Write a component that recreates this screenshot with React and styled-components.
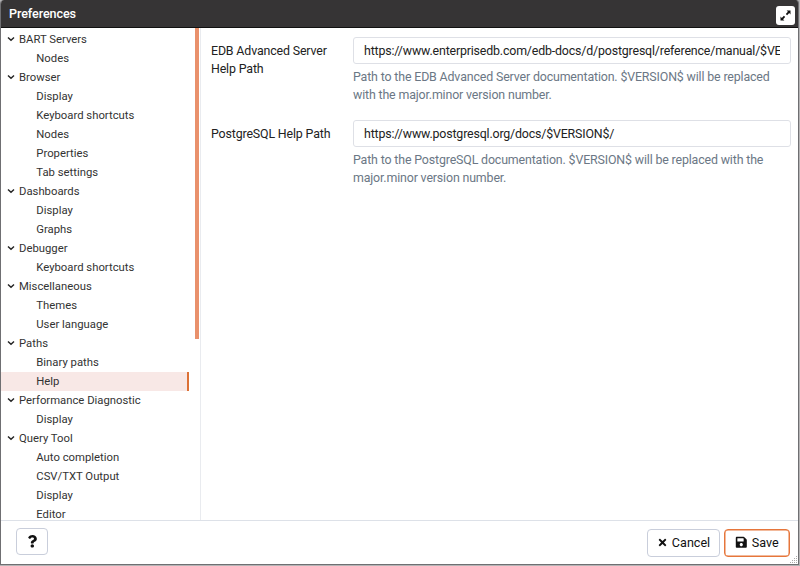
import React from "react";
import styled, { createGlobalStyle, css } from "styled-components";
import { FaQuestion, FaSave, FaTimes } from "react-icons/fa";

const GlobalStyle = createGlobalStyle`
  *, *::before, *::after { box-sizing: border-box; }
  html, body { margin: 0; overflow: hidden; }
  body { background: #b5b4b5; font-family: Roboto, sans-serif; font-size: 12.4px; letter-spacing: -0.15px; color: #222; }
`;

const Dialog = styled.div`
  position: relative;
  display: flex;
  flex-direction: column;
  width: 799px;
  height: 565px;
  background: #fff;
  border: 1px solid #6f6f72;
  border-top: 0;
  border-radius: 4px 3px 0 0;
  overflow: hidden;
`;

const TitleBar = styled.header`
  display: flex;
  align-items: center;
  justify-content: space-between;
  flex: 0 0 28px;
  padding: 0 3px 0 8px;
  background: #363435;
  border-bottom: 1px solid #111;
`;

const Title = styled.h1`
  margin: 1px 0 0;
  color: #fff;
  font-size: 12.6px;
  font-weight: 500;
  line-height: 26px;
  letter-spacing: -0.1px;
`;

const ExpandButton = styled.button`
  display: flex;
  align-items: center;
  justify-content: center;
  width: 19px;
  height: 19px;
  margin-top: 3px;
  padding: 0;
  border: 0;
  border-radius: 3px;
  background: #fff;
  color: #111;
`;

const ExpandIcon = styled.svg`
  width: 11px;
  height: 11px;
  fill: #111;
`;

const Body = styled.main`
  display: flex;
  flex: 1;
  min-height: 0;
`;

const Sidebar = styled.nav`
  display: flex;
  flex: 0 0 200px;
  border-right: 1px solid #e9ebef;
  overflow: hidden;
`;

const Tree = styled.div`
  flex: 0 0 188px;
  padding-top: 2px;
`;

const TreeRow = styled.div`
  display: flex;
  align-items: center;
  height: 19px;
  padding: 0 0 1px ${(p) => (p.$child ? "35.3px" : "6px")};
  font-size: 11.3px;
  letter-spacing: 0;
  white-space: nowrap;
  color: #333;
  ${(p) =>
    p.$selected &&
    css`
      background: #f8e8e6;
      border-right: 2px solid #dc7136;
    `}
`;

const Chevron = styled.svg`
  width: 8px;
  height: 8px;
  margin-right: 4px;
  fill: none;
  stroke: #222;
  stroke-width: 1.4;
`;

const ScrollThumb = styled.div`
  width: 4px;
  height: 311px;
  margin-left: 6px;
  background: #e9916c;
`;

const Panel = styled.section`
  display: flex;
  flex: 1;
  flex-direction: column;
  gap: 16px;
  min-width: 0;
  padding: 9px 7px 0 10px;
`;

const Field = styled.div`
  display: grid;
  grid-template-columns: 142px 1fr;
`;

const Label = styled.label`
  padding-top: 5px;
  line-height: 18px;
`;

const Control = styled.div`
  min-width: 0;
`;

const Input = styled.input`
  display: block;
  width: 100%;
  height: 27px;
  padding: 0 10px 1px;
  border: 1px solid #dee0e6;
  border-radius: 3px;
  background: #fff;
  color: #222;
  font: 12.4px Roboto, sans-serif;
  letter-spacing: -0.17px;
`;

const Hint = styled.p`
  margin: 4px 0 0;
  color: #6b7785;
  line-height: 18px;
  white-space: pre-line;
`;

const Footer = styled.footer`
  display: flex;
  align-items: center;
  flex: 0 0 44px;
  gap: 4px;
  padding: 0 8px 0 15px;
  border-top: 1px solid #dde1e8;
`;

const Button = styled.button`
  display: flex;
  align-items: center;
  justify-content: center;
  gap: 4px;
  width: ${(p) => p.$width};
  height: ${(p) => p.$height || "28px"};
  margin-bottom: ${(p) => (p.$height ? "2px" : "0")};
  padding: 0;
  border: 1px solid ${(p) => (p.$primary ? "#e6763b" : "#c9cedb")};
  box-shadow: ${(p) => (p.$primary ? "inset 0 0 0 0.5px #e6763b" : "none")};
  border-radius: 4px;
  background: #fff;
  color: #111;
  font: 400 12.6px Roboto, sans-serif;
  letter-spacing: 0;
`;

const Spacer = styled.div`
  flex: 1;
`;

const Grip = styled.svg`
  position: absolute;
  right: 0;
  bottom: 0;
  width: 8px;
  height: 8px;
  fill: #aaa;
`;

const groups = [
  ["BART Servers", ["Nodes"]],
  ["Browser", ["Display", "Keyboard shortcuts", "Nodes", "Properties", "Tab settings"]],
  ["Dashboards", ["Display", "Graphs"]],
  ["Debugger", ["Keyboard shortcuts"]],
  ["Miscellaneous", ["Themes", "User language"]],
  ["Paths", ["Binary paths", "Help"]],
  ["Performance Diagnostic", ["Display"]],
  ["Query Tool", ["Auto completion", "CSV/TXT Output", "Display", "Editor"]],
];

const fields = [
  {
    id: "edb",
    label: "EDB Advanced Server Help Path",
    value: "https://www.enterprisedb.com/edb-docs/d/postgresql/reference/manual/$VERSION$/",
    hint: "Path to the EDB Advanced Server documentation. $VERSION$ will be replaced\nwith the major.minor version number.",
  },
  {
    id: "pg",
    label: "PostgreSQL Help Path",
    value: "https://www.postgresql.org/docs/$VERSION$/",
    hint: "Path to the PostgreSQL documentation. $VERSION$ will be replaced with the\nmajor.minor version number.",
  },
];

export default function App() {
  return (
    <>
      <GlobalStyle />
      <Dialog>
        <TitleBar>
          <Title>Preferences</Title>
          <ExpandButton aria-label="Maximize">
            <ExpandIcon viewBox="0 0 11 11">
              <path d="M6.6.5h3.9v3.9L9.2 3.1 7.1 5.2 5.8 3.9 7.9 1.8zM.5 6.6v3.9h3.9L3.1 9.2 5.2 7.1 3.9 5.8 1.8 7.9z" />
            </ExpandIcon>
          </ExpandButton>
        </TitleBar>
        <Body>
          <Sidebar>
            <Tree>
              {groups.map(([name, items]) => (
                <React.Fragment key={name}>
                  <TreeRow>
                    <Chevron viewBox="0 0 8 8">
                      <path d="M1 2.4 4 5.3 7 2.4" />
                    </Chevron>
                    {name}
                  </TreeRow>
                  {items.map((item) => (
                    <TreeRow key={item} $child $selected={item === "Help"}>
                      {item}
                    </TreeRow>
                  ))}
                </React.Fragment>
              ))}
            </Tree>
            <ScrollThumb />
          </Sidebar>
          <Panel>
            {fields.map((f) => (
              <Field key={f.id}>
                <Label htmlFor={f.id}>{f.label}</Label>
                <Control>
                  <Input id={f.id} defaultValue={f.value} />
                  <Hint>{f.hint}</Hint>
                </Control>
              </Field>
            ))}
          </Panel>
        </Body>
        <Footer>
          <Button $width="32px" $height="27px" aria-label="Help">
            <FaQuestion />
          </Button>
          <Spacer />
          <Button $width="73px">
            <FaTimes size={11} />
            Cancel
          </Button>
          <Button $width="66px" $primary>
            <FaSave />
            Save
          </Button>
        </Footer>
        <Grip viewBox="0 0 8 8">
          <path d="M6 0h1v1H6zM4 2h1v1H4zM6 2h1v1H6zM2 4h1v1H2zM4 4h1v1H4zM6 4h1v1H6zM0 6h1v1H0zM2 6h1v1H2zM4 6h1v1H4zM6 6h1v1H6z" />
        </Grip>
      </Dialog>
    </>
  );
}
